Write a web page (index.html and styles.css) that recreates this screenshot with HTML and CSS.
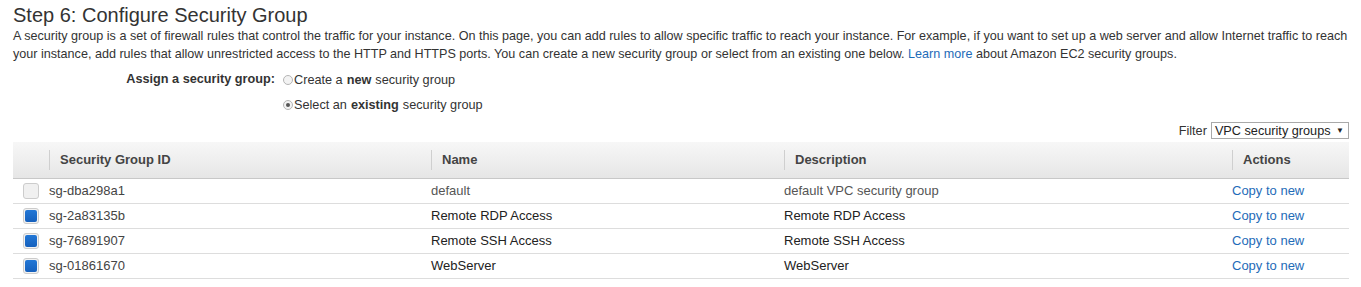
FILE: index.html
```html
<!doctype html>
<html lang="en">
  <head>
    <meta charset="UTF-8" />
    <title>Configure Security Group</title>
    <link rel="stylesheet" href="styles.css">
  </head>
  <body>
    <main class="wizard-step">
      <h1 class="step-title">Step 6: Configure Security Group</h1>
      <p class="step-intro">
        A security group is a set of firewall rules that control the traffic for your instance. On this page, you can add rules to allow specific traffic to reach your instance. For example, if you want to set up a web server and allow Internet traffic to reach your instance, add rules that allow unrestricted access to the HTTP and HTTPS ports. You can create a new security group or select from an existing one below. <a href="#" class="link">Learn more</a> about Amazon EC2 security groups.
      </p>

      <div class="assign-form">
        <div class="assign-label">Assign a security group:</div>
        <div class="assign-options">
          <label class="radio-option"><span class="radio"></span>Create a <b>new</b> security group</label>
          <label class="radio-option"><span class="radio checked"></span>Select an <b>existing</b> security group</label>
        </div>
      </div>

      <div class="filter-row">
        <span class="filter-label">Filter</span>
        <span class="filter-select">VPC security groups <span class="caret">&#9660;</span></span>
      </div>

      <table class="sg-table">
        <colgroup>
          <col class="col-check" />
          <col class="col-id" />
          <col class="col-name" />
          <col class="col-desc" />
          <col class="col-actions" />
        </colgroup>
        <thead>
          <tr>
            <th></th>
            <th><span class="th-inner">Security Group ID</span></th>
            <th><span class="th-inner">Name</span></th>
            <th><span class="th-inner">Description</span></th>
            <th><span class="th-inner">Actions</span></th>
          </tr>
        </thead>
        <tbody>
          <tr class="row-disabled">
            <td><span class="checkbox"></span></td>
            <td class="cell-id">sg-dba298a1</td>
            <td>default</td>
            <td>default VPC security group</td>
            <td><a href="#" class="link">Copy to new</a></td>
          </tr>
          <tr>
            <td><span class="checkbox checked"></span></td>
            <td class="cell-id">sg-2a83135b</td>
            <td>Remote RDP Access</td>
            <td>Remote RDP Access</td>
            <td><a href="#" class="link">Copy to new</a></td>
          </tr>
          <tr>
            <td><span class="checkbox checked"></span></td>
            <td class="cell-id">sg-76891907</td>
            <td>Remote SSH Access</td>
            <td>Remote SSH Access</td>
            <td><a href="#" class="link">Copy to new</a></td>
          </tr>
          <tr>
            <td><span class="checkbox checked"></span></td>
            <td class="cell-id">sg-01861670</td>
            <td>WebServer</td>
            <td>WebServer</td>
            <td><a href="#" class="link">Copy to new</a></td>
          </tr>
        </tbody>
      </table>
    </main>
  </body>
</html>
```

FILE: styles.css
```css
* {
  margin: 0;
  padding: 0;
  box-sizing: border-box;
}

body {
  font-family: "Liberation Sans", Arial, sans-serif;
  font-size: 12px;
  color: #333;
  background: #fff;
}

.wizard-step {
  padding: 0 12px 0 13px;
}

.step-title {
  font-size: 20px;
  font-weight: normal;
  line-height: 24px;
  padding-top: 3px;
  color: #333;
}

.step-intro {
  font-size: 12.6px;
  line-height: 18px;
  color: #333;
}

.link {
  color: #1e6bb8;
  text-decoration: none;
}

.assign-form {
  display: grid;
  grid-template-columns: 262px 1fr;
  column-gap: 8px;
  margin-top: 4px;
  font-size: 12.7px;
}

.assign-label {
  text-align: right;
  font-weight: bold;
  line-height: 25px;
  color: #333;
}

.assign-options {
  display: flex;
  flex-direction: column;
}

.radio-option {
  display: flex;
  align-items: center;
  height: 25px;
  color: #333;
}

.radio-option b {
  margin: 0 4px;
}

.radio {
  width: 10px;
  height: 10px;
  border: 1px solid #b5b5b5;
  border-radius: 50%;
  background: #f3f3f3;
  margin-right: 1px;
  position: relative;
}

.radio.checked::after {
  content: "";
  position: absolute;
  left: 2px;
  top: 2px;
  width: 4px;
  height: 4px;
  border-radius: 50%;
  background: #555;
}

.filter-row {
  display: flex;
  justify-content: flex-end;
  align-items: center;
  gap: 4px;
  height: 21px;
  margin-top: 3px;
  font-size: 12.7px;
}

.filter-select {
  border: 1px solid #a9a9a9;
  height: 17px;
  line-height: 15px;
  padding: 0 4px 0 3px;
  color: #222;
  background: #fff;
}

.caret {
  font-size: 8px;
  vertical-align: 2px;
  margin-left: 2px;
}

.sg-table {
  width: 100%;
  margin-top: 1px;
  border-collapse: collapse;
  table-layout: fixed;
  font-size: 13px;
}

.col-check { width: 36px; }
.col-id { width: 382px; }
.col-name { width: 353px; }
.col-desc { width: 448px; }
.col-actions { width: auto; }

.sg-table th {
  height: 36px;
  text-align: left;
  font-weight: bold;
  color: #444;
  background: linear-gradient(#f7f7f7, #e6e6e6);
  border-bottom: 1px solid #c8c8c8;
  padding: 0;
}

.th-inner {
  display: block;
  border-left: 1px solid #cfcfcf;
  line-height: 20px;
  padding-left: 10px;
}

.sg-table td {
  height: 25px;
  padding: 0;
  border-bottom: 1px solid #ddd;
  color: #222;
  white-space: nowrap;
}

.sg-table td:first-child {
  padding-left: 10px;
  vertical-align: middle;
}

.sg-table td.cell-id {
  color: #444;
}

.row-disabled td {
  color: #555;
}

.checkbox {
  display: block;
  width: 16px;
  height: 16px;
  border: 1px solid #ccc;
  border-radius: 3px;
  background: #f0f0f0;
}

.checkbox.checked {
  background: #f2f2f2;
  position: relative;
}

.checkbox.checked::after {
  content: "";
  position: absolute;
  inset: 1px;
  border-radius: 2px;
  background: linear-gradient(#2277d6, #1560bd);
}
```
